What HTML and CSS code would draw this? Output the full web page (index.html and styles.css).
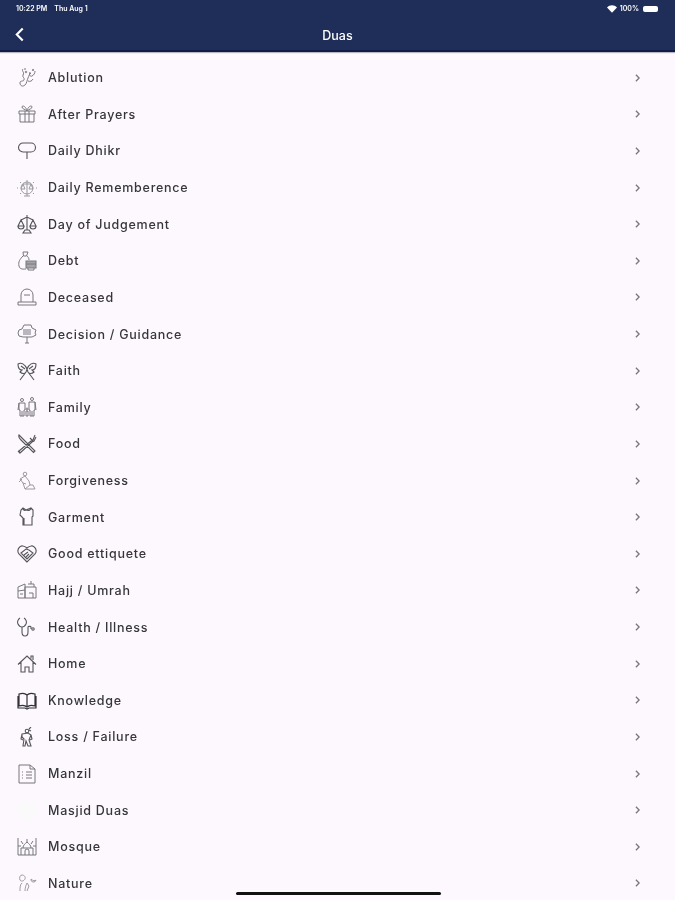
FILE: index.html
```html
<!DOCTYPE html>
<html lang="en">

<head>
    <meta charset="UTF-8" />
    <title>Duas</title>
    <link rel="stylesheet" href="styles.css">
</head>

<body>
    <header class="top-bar">
        <div class="status-bar">
            <div class="status-left"><span>10:22 PM</span><span>Thu Aug 1</span></div>
            <div class="status-right">
                <svg class="wifi" viewBox="0 0 12 9"><path d="M0 2.600C3.400-.7 8.600-.7 12 2.600L6 9z" /></svg>
                <span>100%</span>
                <span class="battery"></span>
            </div>
        </div>
        <div class="nav-row">
            <svg class="back" viewBox="0 0 10 14"><path d="M8 1.500 2.500 7 8 12.500" /></svg>
            <div class="nav-title">Duas</div>
        </div>
    </header>

    <ul class="dua-list">
        <li class="dua-row">
            <svg class="dua-icon" viewBox="0 0 20 20"><path d="M6 1c-2 2 2 3 0 6-1 2 2 3 1 5s-4 0-4 3 3 4 5 2 2-5 3-7 1-4 3-5M13 4c-1 3 0 5 2 4s3-3 3-5M11 13c2 1 4 0 5-2M7 1h2" /><circle cx="9" cy="4" r=".8" /><circle cx="16" cy="2" r=".7" /></svg>
            <span class="dua-name">Ablution</span>
            <svg class="chevron" viewBox="0 0 6 10"><path d="M1 1l4 4-4 4" /></svg>
        </li>
        <li class="dua-row">
            <svg class="dua-icon" viewBox="0 0 20 20"><path d="M2 7h16v3H2zM3 10v8h14v-8M8 7v11M12 7v11M10 7C8 5 5 5 5 3s4-1 5 4c1-5 5-6 5-4s-3 2-5 4" /></svg>
            <span class="dua-name">After Prayers</span>
            <svg class="chevron" viewBox="0 0 6 10"><path d="M1 1l4 4-4 4" /></svg>
        </li>
        <li class="dua-row">
            <svg class="dua-icon dark" viewBox="0 0 20 20"><rect x="1.500" y="2" width="17" height="9" rx="4.500" /><path d="M10 11v7" /></svg>
            <span class="dua-name">Daily Dhikr</span>
            <svg class="chevron" viewBox="0 0 6 10"><path d="M1 1l4 4-4 4" /></svg>
        </li>
        <li class="dua-row">
            <svg class="dua-icon light" viewBox="0 0 20 20"><circle cx="10" cy="10" r="6" /><path d="M10 2v16M7 18h6M6 6h8M6 6l-2 5h4zM14 6l-2 5h4zM1 10H0M20 10h-1M3 4l1 1M17 4l-1 1M3 16l1-1M17 16l-1-1" /></svg>
            <span class="dua-name">Daily Rememberence</span>
            <svg class="chevron" viewBox="0 0 6 10"><path d="M1 1l4 4-4 4" /></svg>
        </li>
        <li class="dua-row">
            <svg class="dua-icon dark" viewBox="0 0 20 20"><path d="M10 1v15M6 19h8l-2-3H8zM4 6l6-3 6 3M4 6l-3 6h6zM16 6l-3 6h6zM1 12c0 4 6 4 6 0M13 12c0 4 6 4 6 0" /></svg>
            <span class="dua-name">Day of Judgement</span>
            <svg class="chevron" viewBox="0 0 6 10"><path d="M1 1l4 4-4 4" /></svg>
        </li>
        <li class="dua-row">
            <svg class="dua-icon" viewBox="0 0 20 20"><path d="M6 1h5L9.500 5h-3zM6 5C3 8 1 11 2 15s5 3 7 3M10 5c1 1 2 2 2 4" /><rect class="fill" x="9" y="10" width="10" height="7" /><path d="M9 13h10M11 17v2h6v-2" /></svg>
            <span class="dua-name">Debt</span>
            <svg class="chevron" viewBox="0 0 6 10"><path d="M1 1l4 4-4 4" /></svg>
        </li>
        <li class="dua-row">
            <svg class="dua-icon" viewBox="0 0 20 20"><path d="M4 15V8a6 6 0 0 1 12 0v7M1 15h18v3H1zM7 8h6" /></svg>
            <span class="dua-name">Deceased</span>
            <svg class="chevron" viewBox="0 0 6 10"><path d="M1 1l4 4-4 4" /></svg>
        </li>
        <li class="dua-row">
            <svg class="dua-icon" viewBox="0 0 20 20"><path d="M10 13v6M8 19h4M7 1h7l1 3 4 2-1 3 1 2-4 2H6l-4-1-1-3 1-3 3-1zM6 8h8M6 6h8M6 10h8" /></svg>
            <span class="dua-name">Decision / Guidance</span>
            <svg class="chevron" viewBox="0 0 6 10"><path d="M1 1l4 4-4 4" /></svg>
        </li>
        <li class="dua-row">
            <svg class="dua-icon dark" viewBox="0 0 20 20"><path d="M10 8C8 3 4 1 1 3c0 4 1 6 4 6l-2 2c2 2 5 2 6 0zM10 8c2-5 6-7 9-5 0 4-1 6-4 6l2 2c-2 2-5 2-6 0zM9 11l-6 8M11 11l6 8M4 5l4 3M16 5l-4 3" /></svg>
            <span class="dua-name">Faith</span>
            <svg class="chevron" viewBox="0 0 6 10"><path d="M1 1l4 4-4 4" /></svg>
        </li>
        <li class="dua-row">
            <svg class="dua-icon" viewBox="0 0 20 20"><circle cx="5" cy="3" r="1.500" /><circle cx="15" cy="2" r="1.500" /><path d="M2 6h6v7H7v6H3v-6H2zM12 5h6v8h-1v6h-4v-6h-1zM5 14v5M15 14v5M2 6l-1 7M18 5l1 8" /><circle cx="10" cy="12" r="1" /><path d="M9 14h2v5H9z" /></svg>
            <span class="dua-name">Family</span>
            <svg class="chevron" viewBox="0 0 6 10"><path d="M1 1l4 4-4 4" /></svg>
        </li>
        <li class="dua-row">
            <svg class="dua-icon dark" viewBox="0 0 20 20"><path d="M2 1l16 16-1.500 1.500L4 6C2 4 1 3 2 1zM18 1l-2 5-2 1L2 17l1 2 12-11 2-1 2-4M13 4l3 3M1 17l2 2" /></svg>
            <span class="dua-name">Food</span>
            <svg class="chevron" viewBox="0 0 6 10"><path d="M1 1l4 4-4 4" /></svg>
        </li>
        <li class="dua-row">
            <svg class="dua-icon light" viewBox="0 0 20 20"><circle cx="8" cy="3" r="1.800" /><path d="M3 8l5-3 4 5 1 4h3l2 4H8l-2-6-3-4M2 11l3-3M6 12l3 1M8 18l5-4" /></svg>
            <span class="dua-name">Forgiveness</span>
            <svg class="chevron" viewBox="0 0 6 10"><path d="M1 1l4 4-4 4" /></svg>
        </li>
        <li class="dua-row">
            <svg class="dua-icon dark" viewBox="0 0 20 20"><path d="M6 1l3 2 5-2 2 2v6l-1 1v8H6v-7L3 8l1-5zM6 1c0 2 1 3 3 2M14 1c0 2-2 3-5 2M7 11v7" /></svg>
            <span class="dua-name">Garment</span>
            <svg class="chevron" viewBox="0 0 6 10"><path d="M1 1l4 4-4 4" /></svg>
        </li>
        <li class="dua-row">
            <svg class="dua-icon dark" viewBox="0 0 20 20"><path d="M10 18 2 10C-1 6 3 1 6 2c2 .5 3 1 4 2 1-1 2-1.500 4-2 3-1 7 4 4 8zM4 9l5-4 3 1 4 3-6 6zM7 11l4-3M9 13l3-3" /></svg>
            <span class="dua-name">Good ettiquete</span>
            <svg class="chevron" viewBox="0 0 6 10"><path d="M1 1l4 4-4 4" /></svg>
        </li>
        <li class="dua-row">
            <svg class="dua-icon" viewBox="0 0 20 20"><path d="M1 7l7-3v14H1zM8 7h11v11H8zM1 11l7-1M11 4h6v3M14 1v3M12 13h4v5M3 14h3" /></svg>
            <span class="dua-name">Hajj / Umrah</span>
            <svg class="chevron" viewBox="0 0 6 10"><path d="M1 1l4 4-4 4" /></svg>
        </li>
        <li class="dua-row">
            <svg class="dua-icon dark" viewBox="0 0 20 20"><path d="M3 1C1 2 0 5 1 7s3 3 4 3 3-1 4-3 0-5-2-6M5 10v5c0 2 1 4 3 4s3-2 3-4v-5c0-1 3-1 3 0v2" /><circle cx="16" cy="12" r="1.200" /></svg>
            <span class="dua-name">Health / Illness</span>
            <svg class="chevron" viewBox="0 0 6 10"><path d="M1 1l4 4-4 4" /></svg>
        </li>
        <li class="dua-row">
            <svg class="dua-icon dark" viewBox="0 0 20 20"><path d="M1 10.500 10 2l9 8.500M4 8v10h4v-5h4v5h4V8M14 4.500V2h2v4" /></svg>
            <span class="dua-name">Home</span>
            <svg class="chevron" viewBox="0 0 6 10"><path d="M1 1l4 4-4 4" /></svg>
        </li>
        <li class="dua-row">
            <svg class="dua-icon darker" viewBox="0 0 20 20"><path d="M10 5C8 3 5 3 2 4v12c3-1 6-1 8 1 2-2 5-2 8-1V4c-3-1-6-1-8 1zM10 5v12M1 6v12h7l2 1 2-1h7V6" /></svg>
            <span class="dua-name">Knowledge</span>
            <svg class="chevron" viewBox="0 0 6 10"><path d="M1 1l4 4-4 4" /></svg>
        </li>
        <li class="dua-row">
            <svg class="dua-icon dark" viewBox="0 0 20 20"><circle cx="10" cy="4" r="1.800" /><path d="M14 0l-2 2M12 3l2 1M5 7l6-1 3 2-2 5 2 6h-3l-2-5-1 5H6l1-7-2-2zM5 7l-1 5 2 1M14 8l1 4-2 1" /></svg>
            <span class="dua-name">Loss / Failure</span>
            <svg class="chevron" viewBox="0 0 6 10"><path d="M1 1l4 4-4 4" /></svg>
        </li>
        <li class="dua-row">
            <svg class="dua-icon" viewBox="0 0 20 20"><path d="M2 1h11l5 4v14H2zM13 1v4h5M5 8h1M9 8h6M5 11h1M9 11h6M5 14h1M9 14h6" /></svg>
            <span class="dua-name">Manzil</span>
            <svg class="chevron" viewBox="0 0 6 10"><path d="M1 1l4 4-4 4" /></svg>
        </li>
        <li class="dua-row">
            <svg class="dua-icon" viewBox="0 0 20 20"><circle class="blank" cx="10" cy="10" r="9.500" /></svg>
            <span class="dua-name">Masjid Duas</span>
            <svg class="chevron" viewBox="0 0 6 10"><path d="M1 1l4 4-4 4" /></svg>
        </li>
        <li class="dua-row">
            <svg class="dua-icon" viewBox="0 0 20 20"><path d="M1 1v17M19 1v17M1 18h18M4 11h12M6 11c0-3 2-4 4-6 2 2 4 3 4 6M4 11v7M16 11v7M8 18v-4a2 2 0 0 1 4 0v4M1 9h3M16 9h3M10 2v3M4 4l2 3M16 4l-2 3" /></svg>
            <span class="dua-name">Mosque</span>
            <svg class="chevron" viewBox="0 0 6 10"><path d="M1 1l4 4-4 4" /></svg>
        </li>
        <li class="dua-row">
            <svg class="dua-icon light" viewBox="0 0 20 20"><path d="M3 18c0-4 0-6 2-8M5 2c2 0 4 2 3 4s-4 3-5 1 0-5 2-5zM8 18c0-3 1-6 2-8l2 3-2 5M14 6a2.500 2.500 0 1 0 5 1c-1 1-3 1-5-1z" /></svg>
            <span class="dua-name">Nature</span>
            <svg class="chevron" viewBox="0 0 6 10"><path d="M1 1l4 4-4 4" /></svg>
        </li>
    </ul>

    <div class="home-indicator"></div>
</body>

</html>
```

FILE: styles.css
```css
html,
body {
    margin: 0;
    padding: 0;
    height: 100%;
    overflow: hidden;
    font-family: 'Inter', sans-serif;
    background: #fdf8fe;
}

* {
    box-sizing: border-box;
}

/* Navy bar with the tablet status row inside it */
.top-bar {
    height: 52px;
    background-color: #1f2e59;
    border-bottom: 2px solid #0f1c47;
    color: white;
    box-shadow: 0 1px 1px rgba(80, 80, 100, 0.4);
}

.status-bar {
    display: flex;
    justify-content: space-between;
    align-items: center;
    height: 16px;
    padding: 1px 17px 0 16px;
    font-size: 7px;
    font-weight: 600;
    filter: blur(0.4px);
}

.status-left {
    display: flex;
    gap: 7px;
}

.status-right {
    display: flex;
    align-items: center;
    gap: 3px;
}

.wifi {
    width: 10px;
    height: 8px;
    fill: white;
}

.battery {
    width: 15px;
    height: 6px;
    margin-left: 1px;
    border-radius: 2px;
    background: white;
}

.nav-row {
    display: flex;
    align-items: center;
    justify-content: center;
    position: relative;
    height: 34px;
    padding-top: 5px;
}

.back {
    position: absolute;
    left: 14px;
    top: 11px;
    width: 11px;
    height: 15px;
    fill: none;
    stroke: white;
    stroke-width: 2;
}

.nav-title {
    font-size: 12.5px;
    font-weight: 500;
    filter: blur(0.4px);
}

/* Dua list */
.dua-list {
    list-style: none;
    margin: 0;
    padding: 7.4px 0 0 0;
}

.dua-row {
    display: flex;
    align-items: center;
    gap: 11px;
    height: 36.64px;
    padding: 0 35px 0 17px;
}

.dua-icon {
    flex: none;
    width: 20px;
    height: 20px;
    fill: none;
    stroke: #77777c;
    stroke-width: 1;
    filter: blur(0.5px);
}

.dua-icon.dark {
    stroke: #55555a;
    stroke-width: 1.1;
}

.dua-icon.darker {
    stroke: #303036;
    stroke-width: 1.2;
}

.dua-icon.light {
    stroke: #9a9a9f;
}

.dua-icon .fill {
    fill: #a5a5a9;
}

.dua-icon .blank {
    stroke: none;
    fill: #fafafa;
}

.dua-name {
    flex: 1;
    font-size: 12.5px;
    font-weight: 500;
    letter-spacing: 0.75px;
    color: #36363a;
    filter: blur(0.5px);
}

.chevron {
    flex: none;
    width: 5px;
    height: 8px;
    fill: none;
    stroke: #77777a;
    stroke-width: 1.6;
    filter: blur(0.4px);
}

.home-indicator {
    position: absolute;
    left: 236px;
    top: 892px;
    width: 205px;
    height: 3px;
    border-radius: 2px;
    background: #111;
}
```
